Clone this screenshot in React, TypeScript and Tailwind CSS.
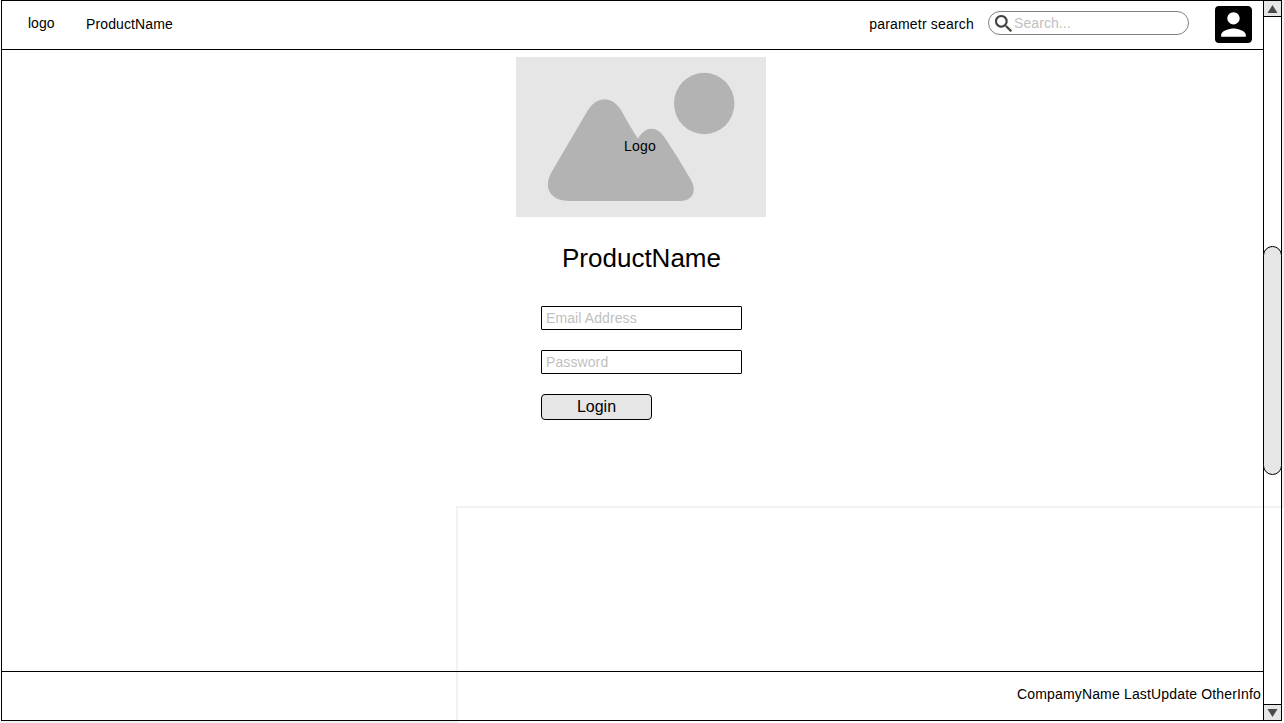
import type { ReactNode } from "react";

function ArrowButton({ up = false }: { up?: boolean }) {
  return (
    <button
      type="button"
      aria-label={up ? "Scroll up" : "Scroll down"}
      className={
        up
          ? "flex h-[16px] w-full shrink-0 items-center justify-center border-b border-black bg-[#e6e6e6]"
          : "flex h-[16px] w-full shrink-0 items-center justify-center border-t border-black bg-[#e6e6e6]"
      }
    >
      <svg width="11" height="8" viewBox="0 0 11 8" className="block">
        <path d={up ? "M5.5 0L10.5 8H.5Z" : "M5.5 8L10.5 0H.5Z"} fill="#4a4a4a" />
      </svg>
    </button>
  );
}

function ScrollBar() {
  return (
    <aside className="flex w-[19px] shrink-0 flex-col border-x border-black">
      <ArrowButton up />
      <div className="flex-1 pt-[229px]">
        <div className="-mx-px h-[229px] rounded-[9.5px] border border-black bg-[#e6e6e6]" />
      </div>
      <ArrowButton />
    </aside>
  );
}

function Header() {
  return (
    <header className="flex h-[49px] shrink-0 items-start border-b border-black">
      <span className="ml-[26px] mt-[14px] w-[58px] leading-4">logo</span>
      <span className="mt-[15px] leading-4 tracking-[0.12px]">ProductName</span>
      <span className="ml-auto mt-[15px] leading-4 tracking-[0.19px]">parametr search</span>
      <label className="ml-[14px] mt-[10px] flex h-[24px] w-[201px] items-center rounded-full border border-[#808080] bg-white pl-[5.5px]">
        <svg width="17" height="17" viewBox="3 3 17.49 17.49" className="mt-px block shrink-0">
          <path
            fill="#404040"
            stroke="#404040"
            strokeWidth="0.2"
            d="M15.5 14h-.79l-.28-.27A6.471 6.471 0 0 0 16 9.5 6.5 6.5 0 1 0 9.5 16c1.61 0 3.09-.59 4.23-1.57l.27.28v.79l5 4.99L20.49 19l-4.99-5zm-6 0C7.01 14 5 11.99 5 9.5S7.01 5 9.5 5 14 7.01 14 9.5 11.99 14 9.5 14z"
          />
        </svg>
        <input
          placeholder="Search..."
          className="ml-[2.5px] h-[16px] w-[150px] bg-transparent leading-4 tracking-[0.08px] outline-none placeholder:text-[#bfbfbf]"
        />
      </label>
      <svg width="37" height="37" viewBox="3 3 18 18" className="ml-[26px] mr-[11px] mt-[5px] block shrink-0">
        <path
          fill="#000"
          d="M3 5v14a2 2 0 0 0 2 2h14c1.1 0 2-.9 2-2V5c0-1.100-.9-2-2-2H5a2 2 0 0 0-2 2zm12 4c0 1.660-1.340 3-3 3s-3-1.340-3-3 1.340-3 3-3 3 1.340 3 3zm-9 8c0-2 4-3.100 6-3.100s6 1.100 6 3.100v1H6v-1z"
        />
      </svg>
    </header>
  );
}

function Picture({ children }: { children: ReactNode }) {
  return (
    <div className="grid h-[160px] w-[250px] place-items-center bg-[#e6e6e6]">
      <svg width="250" height="160" viewBox="0 0 250 160" className="col-start-1 row-start-1 block">
        <ellipse cx="188.2" cy="46.500" rx="30.200" ry="30.700" fill="#b3b3b3" />
        <path
          fill="#b3b3b3"
          d="M54 144C35 144 27 132 35 116L72 53Q79 42.300 88.500 42.300Q98 42.300 105 53Q113 68 121.700 81.500Q128 71.700 135.500 71.700Q143 71.700 149 81Q163 102 175 123C181 134 177 144 164 144Z"
        />
      </svg>
      <span className="col-start-1 row-start-1 mb-[-1px] mr-[2px] mt-[16px] leading-4 tracking-[0.2px]">
        {children}
      </span>
    </div>
  );
}

function Field({ label, type }: { label: string; type: string }) {
  return (
    <input
      type={type}
      placeholder={label}
      className="block h-[24px] w-[201px] rounded-[1px] border border-black bg-white px-[4px] leading-4 tracking-[0.1px] outline-none placeholder:text-[#bfbfbf]"
    />
  );
}

function LoginPanel() {
  return (
    <main className="flex-1 pl-[514px] pt-[7px]">
      <Picture>Logo</Picture>
      <h1 className="ml-[46px] mt-[26px] h-[30px] text-[26px] leading-[30px]">ProductName</h1>
      <form className="ml-[25px] mt-[33px] flex flex-col items-start gap-5">
        <Field label="Email Address" type="email" />
        <Field label="Password" type="password" />
        <button
          type="button"
          className="h-[26px] w-[111px] rounded-[4px] border border-black bg-[#e6e6e6] text-base leading-6"
        >
          Login
        </button>
      </form>
    </main>
  );
}

export default function App() {
  return (
    <div className="relative h-[723px] w-[1284px] overflow-hidden bg-white font-['Liberation_Sans',Arial,sans-serif] text-[14px] text-black">
      <div className="absolute left-[456px] top-[506px] h-[217px] w-[828px] border-l-2 border-t-2 border-[#f2f2f2]" />
      <div className="absolute right-0 top-0 h-[508px] w-[2px] bg-[#f2f2f2]" />
      <div className="absolute bottom-0 left-0 h-[2px] w-[458px] bg-[#f2f2f2]" />
      <div className="relative ml-px flex h-[721px] w-[1281px] border-y border-l border-black">
        <div className="flex flex-1 flex-col">
          <Header />
          <LoginPanel />
          <footer className="flex h-[49px] shrink-0 items-start justify-end border-t border-black pr-[2px] pt-[14px] leading-4 tracking-[0.16px]">
            CompamyName LastUpdate OtherInfo
          </footer>
        </div>
        <ScrollBar />
      </div>
    </div>
  );
}
